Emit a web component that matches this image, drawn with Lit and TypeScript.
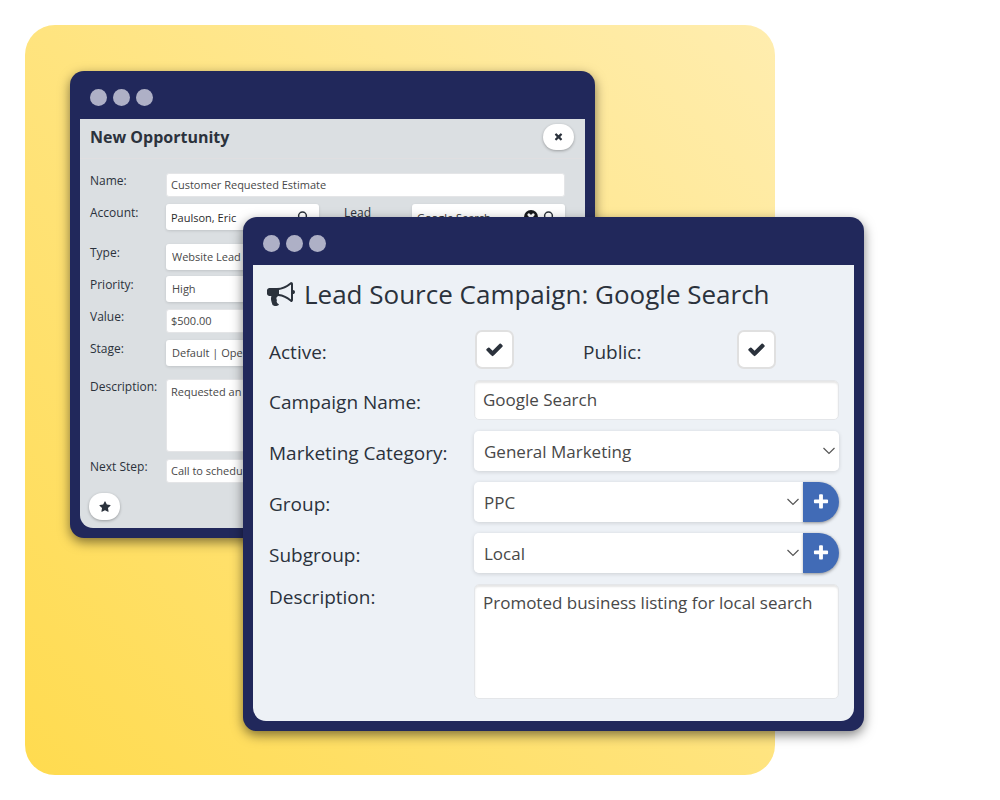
import { LitElement, html, css, svg } from "lit";
import { customElement } from "lit/decorators.js";

const ICONS: Record<string, string> = {
  bullhorn:
    "M1664 640q53 0 90.5 37.5t37.5 90.5-37.5 90.5-90.5 37.5v384q0 52-38 90t-90 38q-417-347-812-380-58 19-91 66t-31 100.5 40 92.5q-20 33-23 65.5t6 58 33.5 55 48 50 61.5 50.5q-29 58-111.5 83t-168.5 11.5-132-55.5q-7-23-29.5-87.5t-32-94.5-23-89-15-101 3.5-98.5 22-110.5h-122q-66 0-113-47t-47-113v-192q0-66 47-113t113-47h480q435 0 896-384 52 0 90 38t38 90v384zm-128 604v-954q-394 302-768 343v270q377 42 768 341z",
  check:
    "M1671 566q0 40-28 68l-724 724-136 136q-28 28-68 28t-68-28l-136-136-362-362q-28-28-28-68t28-68l136-136q28-28 68-28t68 28l294 295 656-657q28-28 68-28t68 28l136 136q28 28 28 68z",
  plus: "M1600 736v192q0 40-28 68t-68 28h-416v416q0 40-28 68t-68 28h-192q-40 0-68-28t-28-68v-416h-416q-40 0-68-28t-28-68v-192q0-40 28-68t68-28h416v-416q0-40 28-68t68-28h192q40 0 68 28t28 68v416h416q40 0 68 28t28 68z",
  times:
    "M1490 1322q0 40-28 68l-136 136q-28 28-68 28t-68-28l-294-294-294 294q-28 28-68 28t-68-28l-136-136q-28-28-28-68t28-68l294-294-294-294q-28-28-28-68t28-68l136-136q28-28 68-28t68 28l294 294 294-294q28-28 68-28t68 28l136 136q28 28 28 68t-28 68l-294 294 294 294q28 28 28 68z",
  star: "M1728 647q0 22-26 48l-363 354 86 500q1 7 1 20 0 21-10.5 35.5t-30.5 14.5q-19 0-40-12l-449-236-449 236q-22 12-40 12-21 0-31.5-14.5t-10.5-35.5q0-6 2-20l86-500-364-354q-25-27-25-48 0-37 56-46l502-73 225-455q19-41 49-41t49 41l225 455 502 73q56 9 56 46z",
};

const icon = (name: string, size: number) => html`<svg
  class="icon"
  width=${size}
  height=${size}
  viewBox="0 0 1792 1792"
  aria-hidden="true"
>
  ${svg`<path fill="currentColor" d=${ICONS[name]}></path>`}
</svg>`;

const chevron = html`<svg class="chevron" width="12" height="8" viewBox="0 0 12 8" aria-hidden="true">
  <path d="M0.5 1 6 6.4 11.5 1" fill="none" stroke="#555" stroke-width="1.2" />
</svg>`;

const magnifier = html`<svg width="12" height="12" viewBox="0 0 12 12" aria-hidden="true">
  <circle cx="5.5" cy="5" r="3.9" fill="none" stroke="#2b323b" stroke-width="1.5" />
  <path d="M8.3 8 11.2 11" stroke="#2b323b" stroke-width="1.8" stroke-linecap="round" />
</svg>`;

const clear = html`<svg width="14" height="14" viewBox="0 0 14 14" aria-hidden="true">
  <circle cx="7" cy="7" r="7" fill="#17191c" />
  <path d="M4.8 4.8 9.2 9.2M9.2 4.8 4.8 9.2" stroke="#fff" stroke-width="2.8" stroke-linecap="round" />
</svg>`;

const fieldStyles = css`
  :host {
    display: block;
    color: #2b323c;
  }
  * {
    box-sizing: border-box;
  }
  h2 {
    margin: 0;
  }
  input,
  select,
  textarea,
  button {
    font: inherit;
    margin: 0;
    border: 0;
    outline: 0;
    color: inherit;
  }
  input,
  select,
  textarea {
    display: block;
    width: 100%;
    min-width: 0;
    background: #fff;
    color: #484848;
    appearance: none;
  }
  textarea {
    resize: none;
    overflow: hidden;
  }
  button {
    display: flex;
    align-items: center;
    justify-content: center;
    padding: 0;
    background: #fff;
  }
  svg {
    display: block;
    flex: none;
  }
`;

@customElement("browser-frame")
export class BrowserFrame extends LitElement {
  static styles = css`
    :host {
      display: block;
      padding: 0 10px 10px;
      border-radius: 14px;
      background: #21285b;
      box-shadow: 0 4px 12px rgba(0, 0, 0, 0.5);
    }
    .dots {
      display: flex;
      gap: 6px;
      padding: 18px 10px 13px;
    }
    .dot {
      width: 17px;
      height: 17px;
      border-radius: 50%;
      background: #aeb0c6;
    }
    .content {
      overflow: hidden;
      border-radius: 0 0 13px 13px;
    }
  `;
  render() {
    return html`
      <div class="dots"><span class="dot"></span><span class="dot"></span><span class="dot"></span></div>
      <div class="content"><slot></slot></div>
    `;
  }
}

@customElement("opportunity-form")
export class OpportunityForm extends LitElement {
  static styles = [
    fieldStyles,
    css`
      :host {
        background: #dbdfe2;
        font-size: 12px;
        line-height: 17px;
      }
      .head {
        display: flex;
        align-items: center;
        justify-content: space-between;
        height: 40px;
        padding: 0 11px 4px 10px;
        border-bottom: 1px solid #e0dfe1;
      }
      .title {
        font-size: 16px;
        line-height: 22px;
        font-weight: 700;
      }
      .round {
        width: 31px;
        height: 26px;
        border-radius: 13px;
        box-shadow: 0 1px 3px rgba(0, 0, 0, 0.3);
      }
      .grid {
        display: grid;
        grid-template-columns: 66px 1fr;
        grid-auto-rows: minmax(26px, auto);
        column-gap: 10px;
        row-gap: 6px;
        padding: 13px 20px 0 10px;
      }
      .split {
        display: grid;
        grid-template-columns: 1fr 43px 1fr;
        column-gap: 25px;
      }
      .inset {
        padding-top: 1px;
      }
      .text {
        height: 24px;
        padding: 0 4px 2px;
        border: 1px solid #e4e5e7;
        border-radius: 3px;
        font-size: 11px;
      }
      .area {
        height: 73px;
        padding: 3px 4px;
      }
      .select {
        height: 26px;
        padding: 0 6px 2px;
        border-radius: 3px;
        font-size: 11px;
        box-shadow: 0 1px 3px rgba(0, 0, 0, 0.12);
      }
      .lookup {
        display: flex;
        align-items: center;
        gap: 5px;
        height: 26px;
        padding: 0 10px 0 5px;
        border-radius: 3px;
        background: #fff;
        box-shadow: 0 1px 3px rgba(0, 0, 0, 0.12);
        font-size: 11px;
      }
      .lookup input {
        flex: 1;
        height: 24px;
        padding: 0;
        color: #2b2b2b;
      }
      .tall {
        min-height: 32px;
      }
      .foot {
        padding: 9px 9px 8px;
      }
      .foot .round {
        height: 27px;
      }
    `,
  ];
  render() {
    return html`
      <div class="head">
        <h2 class="title">New Opportunity</h2>
        <button class="round" aria-label="Close">${icon("times", 11)}</button>
      </div>
      <div class="grid">
        <label for="name">Name:</label>
        <div class="inset"><input class="text" id="name" value="Customer Requested Estimate" /></div>

        <label for="account">Account:</label>
        <div class="split">
          <div class="lookup"><input id="account" value="Paulson, Eric" />${magnifier}</div>
          <label for="lead">Lead Source:</label>
          <div class="lookup"><input id="lead" value="Google Search" />${clear}${magnifier}</div>
        </div>

        <label for="type">Type:</label>
        <div>
          <select class="select" id="type"><option>Website Lead</option></select>
        </div>

        <label for="priority">Priority:</label>
        <div>
          <select class="select" id="priority"><option>High</option></select>
        </div>

        <label for="value">Value:</label>
        <div class="inset"><input class="text" id="value" value="$500.00" /></div>

        <label for="stage">Stage:</label>
        <div class="tall">
          <select class="select" id="stage"><option>Default | Open</option></select>
        </div>

        <label for="description">Description:</label>
        <div class="inset"><textarea class="text area" id="description">Requested an estimate</textarea></div>

        <label for="next">Next Step:</label>
        <div class="inset"><input class="text" id="next" value="Call to schedule" /></div>
      </div>
      <div class="foot">
        <button class="round" aria-label="Favorite">${icon("star", 12)}</button>
      </div>
    `;
  }
}

@customElement("campaign-form")
export class CampaignForm extends LitElement {
  static styles = [
    fieldStyles,
    css`
      :host {
        padding: 10px 15px 22px 16px;
        background: #edf1f6;
        font-size: 19px;
        line-height: 26px;
      }
      .title {
        display: flex;
        align-items: center;
        gap: 9px;
        margin: 0 0 17px -2px;
        font-size: 26px;
        line-height: 38px;
        font-weight: 400;
      }
      .grid {
        display: grid;
        grid-template-columns: 194px 1fr;
        column-gap: 11px;
        row-gap: 11px;
      }
      .label {
        padding-top: 9px;
      }
      .label.top {
        padding-top: 0;
      }
      .checks {
        display: grid;
        grid-template-columns: 108px 154px auto;
        justify-content: start;
        padding-left: 1px;
      }
      .tick {
        display: grid;
        width: 39px;
        height: 39px;
        place-items: center;
      }
      .tick > * {
        grid-area: 1 / 1;
      }
      .tick input {
        width: 39px;
        height: 39px;
        border: 2px solid #e0e0e0;
        border-radius: 7px;
      }
      .tick svg,
      .pick svg {
        pointer-events: none;
        z-index: 1;
      }
      .text {
        height: 40px;
        padding: 0 8px 2px;
        border: 1px solid #e4e6e9;
        border-radius: 5px;
        box-shadow: inset 0 2px 2px rgba(0, 0, 0, 0.1);
        font-size: 17px;
      }
      .area {
        height: 115px;
        padding: 6px 8px;
        line-height: 24px;
      }
      .pick {
        display: flex;
        border-radius: 5px;
        box-shadow: 0 1px 4px rgba(0, 0, 0, 0.14);
      }
      .pick.joined {
        border-radius: 5px 20px 20px 5px;
      }
      .field {
        display: grid;
        flex: 1;
        align-items: center;
      }
      .field > * {
        grid-area: 1 / 1;
      }
      .chevron {
        justify-self: end;
        margin-right: 4px;
      }
      .select {
        height: 40px;
        padding: 2px 10px 0;
        border-radius: 5px;
        font-size: 17px;
      }
      .joined .select {
        border-radius: 5px 0 0 5px;
      }
      .add {
        width: 36px;
        height: 40px;
        border-radius: 0 20px 20px 0;
        background: #416bb6;
        color: #fff;
        box-shadow: 0 1px 3px rgba(0, 0, 0, 0.3);
      }
    `,
  ];

  private pick(id: string, value: string, addable: boolean) {
    return html`<div class="pick ${addable ? "joined" : ""}">
      <div class="field">
        <select class="select" id=${id}>
          <option>${value}</option>
        </select>
        ${chevron}
      </div>
      ${addable ? html`<button class="add" aria-label="Add ${id}">${icon("plus", 18)}</button>` : ""}
    </div>`;
  }

  render() {
    return html`
      <h2 class="title">${icon("bullhorn", 28)}<span>Lead Source Campaign: Google Search</span></h2>
      <div class="grid">
        <label class="label" for="active">Active:</label>
        <div class="checks">
          <div class="tick"><input type="checkbox" id="active" checked />${icon("check", 19)}</div>
          <label class="label" for="public">Public:</label>
          <div class="tick"><input type="checkbox" id="public" checked />${icon("check", 19)}</div>
        </div>

        <label class="label" for="campaign">Campaign Name:</label>
        <input class="text" id="campaign" value="Google Search" />

        <label class="label" for="category">Marketing Category:</label>
        ${this.pick("category", "General Marketing", false)}

        <label class="label" for="group">Group:</label>
        ${this.pick("group", "PPC", true)}

        <label class="label" for="subgroup">Subgroup:</label>
        ${this.pick("subgroup", "Local", true)}

        <label class="label top" for="details">Description:</label>
        <textarea class="text area" id="details">Promoted business listing for local search</textarea>
      </div>
    `;
  }
}

@customElement("app-root")
export class AppRoot extends LitElement {
  static styles = css`
    :host {
      display: block;
      min-height: 100vh;
      background: #fff;
      font-family: "Open Sans", "Noto Sans", sans-serif;
    }
    .stage {
      position: relative;
      max-width: 1000px;
      padding: 25px;
      box-sizing: border-box;
    }
    .backdrop {
      width: 79%;
      max-width: 750px;
      aspect-ratio: 1;
      border-radius: 30px;
      background: linear-gradient(45deg, #ffdb4f, #ffe37a 45%, #ffedaf);
    }
    .window {
      position: absolute;
      box-sizing: border-box;
    }
    .back {
      top: 71px;
      left: 7%;
      width: 52.5%;
    }
    .front {
      top: 217px;
      left: 24.3%;
      width: 62.1%;
    }
  `;
  render() {
    return html`
      <main class="stage">
        <div class="backdrop"></div>
        <browser-frame class="window back"><opportunity-form></opportunity-form></browser-frame>
        <browser-frame class="window front"><campaign-form></campaign-form></browser-frame>
      </main>
    `;
  }
}
